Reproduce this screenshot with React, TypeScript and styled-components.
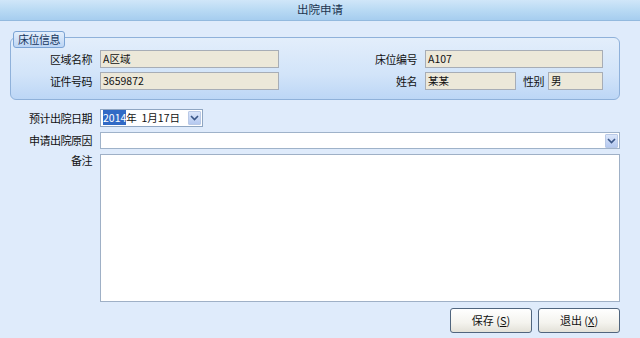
import React from 'react';
import styled, { createGlobalStyle } from 'styled-components';

const GlobalStyle = createGlobalStyle`
  html, body {
    margin: 0;
    padding: 0;
    background: #dfebfb;
    font-family: "Noto Sans CJK SC", "Liberation Sans", sans-serif;
    font-size: 11px;
    color: #111;
  }
  * { box-sizing: border-box; }
`;

const Page = styled.div`
  width: 640px;
  height: 338px;
  background: #dfebfb;
  overflow: hidden;
`;

const TitleBar = styled.div`
  height: 21px;
  display: flex;
  align-items: center;
  justify-content: center;
  background: linear-gradient(to bottom, #d0e6f9 0%, #b9daf4 50%, #a6cdef 100%);
  border-bottom: 1px solid #93b9de;
  color: #1d3550;
  font-size: 11.5px;
  line-height: 1;
`;

const Group = styled.div`
  position: relative;
  margin: 16px 20px 0 10px;
  padding: 12px 16px 9px 0;
  border: 1px solid #8fb1da;
  border-radius: 6px;
  background: linear-gradient(to bottom, #e3eefb 0%, #d2e4f9 60%, #bcd6f6 100%);
  display: grid;
  grid-template-columns: 81px 179px 1fr 178px;
  column-gap: 8px;
  row-gap: 4px;
  align-items: center;
`;

const Legend = styled.div`
  position: absolute;
  left: 2px;
  top: -7px;
  height: 17px;
  padding: 0 4px;
  display: flex;
  align-items: center;
  border: 1px solid #7aa3d4;
  border-radius: 3px;
  background: linear-gradient(to bottom, #e4effc, #bcd5f4);
  color: #17375e;
  letter-spacing: -0.5px;
  line-height: 1;
`;

const Label = styled.span`
  text-align: right;
  white-space: nowrap;
  letter-spacing: -0.5px;
  line-height: 1;
`;

const ReadBox = styled.div<{ $w?: number }>`
  height: 18px;
  width: ${p => (p.$w ? `${p.$w}px` : '100%')};
  flex: ${p => (p.$w ? 'none' : '1')};
  padding: 0 2px;
  display: flex;
  align-items: center;
  background: #ece8d9;
  border: 1px solid #a7adb6;
  line-height: 1;
  font-size: 10.5px;
`;

const PairCell = styled.div`
  display: flex;
  align-items: center;
`;

const SmallLabel = styled.span`
  margin: 0 4px 0 7px;
  letter-spacing: -0.5px;
  line-height: 1;
`;

const Form = styled.div`
  margin: 9px 20px 0 11px;
  display: grid;
  grid-template-columns: 81px 1fr;
  column-gap: 8px;
  row-gap: 4px;
`;

const FormLabel = styled.span<{ $top?: boolean }>`
  text-align: right;
  letter-spacing: -0.5px;
  line-height: 1;
  align-self: ${p => (p.$top ? 'start' : 'center')};
  padding-top: ${p => (p.$top ? '2px' : '0')};
`;

const DateBox = styled.div`
  width: 103px;
  height: 18px;
  display: flex;
  align-items: center;
  padding: 0 1px 0 2px;
  background: #fff;
  border: 1px solid #8fa6c2;
  line-height: 1;
`;

const Selected = styled.span`
  background: #316ac5;
  color: #fff;
`;

const DateText = styled.span`
  flex: 1;
  white-space: pre;
  font-size: 10.5px;
`;

const DropButton = styled.div`
  width: 13px;
  height: 14px;
  display: flex;
  align-items: center;
  justify-content: center;
  background: linear-gradient(to bottom, #dbe6fa, #b5c9f0);
  border: 1px solid #b9c9e6;
  border-radius: 1px;
`;

const Combo = styled.div`
  height: 17px;
  margin-top: 1px;
  display: flex;
  align-items: center;
  justify-content: flex-end;
  padding-right: 1px;
  background: #fff;
  border: 1px solid #9fb2c9;
`;

const Memo = styled.div`
  height: 148px;
  margin-top: 1px;
  background: #fff;
  border: 1px solid #9fb0c6;
`;

const Buttons = styled.div`
  margin: 6px 20px 0 0;
  display: flex;
  justify-content: flex-end;
  gap: 6px;
`;

const Button = styled.button`
  width: 82px;
  height: 25px;
  padding: 0;
  border: 1px solid #50657e;
  border-radius: 3px;
  background: linear-gradient(to bottom, #ffffff 0%, #f4f3ee 60%, #e3e1d8 100%);
  font-family: inherit;
  font-size: 11px;
  color: #111;
  white-space: pre;
  line-height: 1;
`;

const Key = styled.span`
  text-decoration: underline;
`;

const Chevron = () => (
  <svg width="9" height="6" viewBox="0 0 9 6">
    <path d="M1 1 L4.5 4.5 L8 1" fill="none" stroke="#3a5686" strokeWidth="1.6" />
  </svg>
);

export default function App() {
  return (
    <Page>
      <GlobalStyle />
      <TitleBar>出院申请</TitleBar>
      <Group>
        <Legend>床位信息</Legend>
        <Label>区域名称</Label>
        <ReadBox>A区域</ReadBox>
        <Label>床位编号</Label>
        <ReadBox>A107</ReadBox>
        <Label>证件号码</Label>
        <ReadBox>3659872</ReadBox>
        <Label>姓名</Label>
        <PairCell>
          <ReadBox $w={91}>某某</ReadBox>
          <SmallLabel>性别</SmallLabel>
          <ReadBox>男</ReadBox>
        </PairCell>
      </Group>
      <Form>
        <FormLabel>预计出院日期</FormLabel>
        <DateBox>
          <DateText>
            <Selected>2014</Selected>年  1月17日
          </DateText>
          <DropButton>
            <Chevron />
          </DropButton>
        </DateBox>
        <FormLabel>申请出院原因</FormLabel>
        <Combo>
          <DropButton>
            <Chevron />
          </DropButton>
        </Combo>
        <FormLabel $top>备注</FormLabel>
        <Memo />
      </Form>
      <Buttons>
        <Button>
          保存 (<Key>S</Key>)
        </Button>
        <Button>
          退出 (<Key>X</Key>)
        </Button>
      </Buttons>
    </Page>
  );
}
